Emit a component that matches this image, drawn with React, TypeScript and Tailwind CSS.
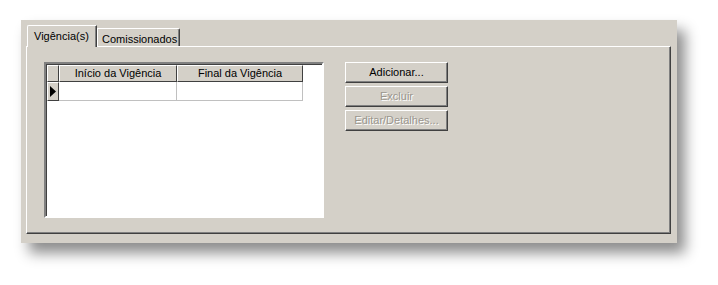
import React from "react";

const font = { fontFamily: '"Liberation Sans", Arial, sans-serif' };

function Button({ label, disabled }: { label: string; disabled?: boolean }) {
  return (
    <div
      className={`flex h-[21px] w-[103px] items-center justify-center border border-t-white border-l-white border-r-[#404040] border-b-[#404040] bg-[#d4d0c8] text-[11px] shadow-[inset_-1px_-1px_0_#808080] ${
        disabled
          ? "text-[#9a968e] [text-shadow:1px_1px_0_#ffffff]"
          : "text-black"
      }`}
    >
      {label}
    </div>
  );
}

function Grid() {
  return (
    <div className="flex h-[156px] w-[280px] flex-col border-2 border-t-[#808080] border-l-[#808080] border-r-white border-b-white bg-white shadow-[inset_1px_1px_0_#404040]">
      <div className="flex h-[18px] pl-px pt-px">
        <div className="w-[12px] border border-t-white border-l-white border-r-[#404040] border-b-[#404040] bg-[#d4d0c8]" />
        <div className="flex w-[118px] items-center justify-center border border-t-white border-l-white border-r-[#404040] border-b-[#404040] bg-[#d4d0c8] text-[11px] text-black">
          Início da Vigência
        </div>
        <div className="flex w-[126px] items-center justify-center border border-t-white border-l-white border-r-[#404040] border-b-[#404040] bg-[#d4d0c8] text-[11px] text-black">
          Final da Vigência
        </div>
      </div>
      <div className="flex h-[19px] pl-px">
        <div className="flex w-[12px] items-center border border-t-white border-l-white border-r-[#404040] border-b-[#404040] bg-[#d4d0c8] pl-[2px]">
          <svg width="6" height="11" viewBox="0 0 6 11">
            <path d="M0 0 L6 5.5 L0 11 Z" fill="#000" />
          </svg>
        </div>
        <div className="w-[118px] border-r border-b border-[#c0c0c0] bg-white" />
        <div className="w-[126px] border-r border-b border-[#c0c0c0] bg-white" />
      </div>
    </div>
  );
}

export default function App() {
  return (
    <div className="h-[285px] w-[718px] bg-white pl-[21px] pt-[20px]" style={font}>
      <div className="flex h-[223px] w-[656px] flex-col bg-[#d4d0c8] pl-[5px] pt-[5px] shadow-[8px_10px_13px_rgba(0,0,0,0.45)]">
        <div className="flex h-[21px] items-end pl-px">
          <div className="relative z-10 mb-[-1px] flex h-[22px] w-[70px] items-start rounded-tl-[2px] border-t border-l border-r border-t-white border-l-white border-r-[#404040] bg-[#d4d0c8] pl-[6px] pt-[2px] text-[11px] text-black shadow-[inset_-1px_0_0_#808080]">
            Vigência(s)
          </div>
          <div className="flex h-[18px] w-[83px] items-start rounded-tr-[2px] border-t border-l border-r border-t-white border-l-white border-r-[#404040] bg-[#d4d0c8] pl-[4px] pt-[2px] text-[11px] text-black shadow-[inset_-1px_0_0_#808080]">
            Comissionados
          </div>
        </div>
        <div className="flex h-[188px] w-[645px] gap-[21px] border border-t-white border-l-white border-r-[#404040] border-b-[#404040] pl-[17px] pt-[15px] shadow-[inset_-1px_-1px_0_#808080]">
          <Grid />
          <div className="flex flex-col gap-[3px]">
            <Button label="Adicionar..." />
            <Button label="Excluir" disabled />
            <Button label="Editar/Detalhes..." disabled />
          </div>
        </div>
      </div>
    </div>
  );
}
